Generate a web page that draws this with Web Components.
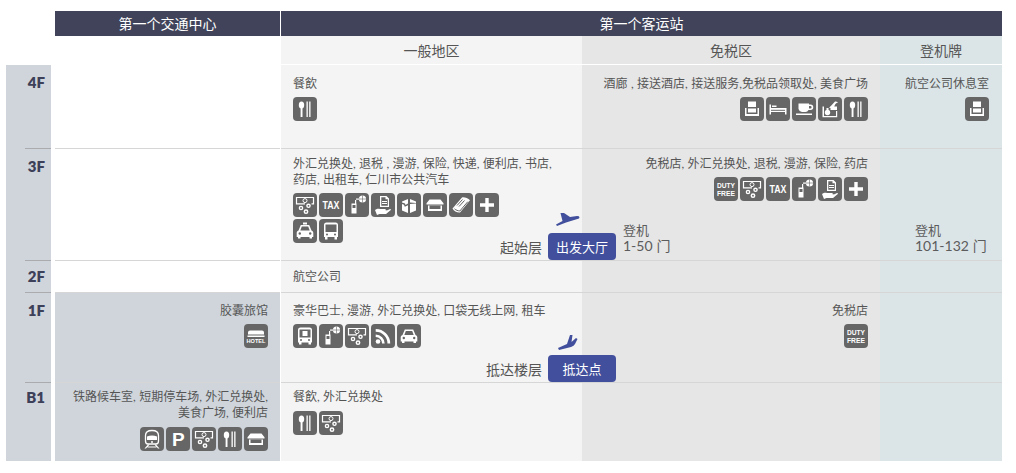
<!DOCTYPE html>
<html lang="zh">
<head>
<meta charset="utf-8">
<title>Floor guide</title>
<style>
  html, body { margin: 0; background: #fff; }
  body { font-family: Lato, "Noto Sans CJK SC", sans-serif; color: #555; }
</style>
</head>
<body>
<floor-map>
  <floor-head slot="head"></floor-head>

  <floor-row h="84" pad="11">
    <floor-label slot="label" pad="9">4F</floor-label>
    <floor-cell></floor-cell>
    <floor-cell zone="general">餐飲
      <icon-row slot="icons" gap="5"><svc-icon name="food"></svc-icon></icon-row>
    </floor-cell>
    <floor-cell zone="duty" end>酒廊 , 接送酒店, 接送服务,免税品领取处, 美食广场
      <icon-row slot="icons" gap="5"><svc-icon name="lounge"></svc-icon><svc-icon name="bed"></svc-icon><svc-icon name="cafe"></svc-icon><svc-icon name="pickup"></svc-icon><svc-icon name="food"></svc-icon></icon-row>
    </floor-cell>
    <floor-cell zone="board" end>航空公司休息室
      <icon-row slot="icons" gap="5"><svc-icon name="lounge"></svc-icon></icon-row>
    </floor-cell>
  </floor-row>

  <floor-row h="112" pad="7">
    <floor-label slot="label" pad="9">3F</floor-label>
    <floor-cell></floor-cell>
    <floor-cell zone="general">外汇兑换处, 退税 , 漫游, 保险, 快递, 便利店, 书店,<br>药店, 出租车, 仁川市公共汽车
      <icon-row slot="icons" gap="5" wrap="208"><svc-icon name="exchange"></svc-icon><svc-icon name="tax"></svc-icon><svc-icon name="roam"></svc-icon><svc-icon name="insure"></svc-icon><svc-icon name="parcel"></svc-icon><svc-icon name="store"></svc-icon><svc-icon name="book"></svc-icon><svc-icon name="plus"></svc-icon><svc-icon name="taxi"></svc-icon><svc-icon name="bus"></svc-icon></icon-row>
    </floor-cell>
    <floor-cell zone="duty" end>免税店, 外汇兑换处, 退税, 漫游, 保险, 药店
      <icon-row slot="icons" gap="5"><svc-icon name="dutyfree"></svc-icon><svc-icon name="exchange"></svc-icon><svc-icon name="tax"></svc-icon><svc-icon name="roam"></svc-icon><svc-icon name="insure"></svc-icon><svc-icon name="plus"></svc-icon></icon-row>
      <gate-note slot="foot" inset="29">登机<span slot="gates">1-50 门</span></gate-note>
    </floor-cell>
    <floor-cell zone="board" end>
      <gate-note slot="foot" inset="23">登机<span slot="gates">101-132 门</span></gate-note>
    </floor-cell>
    <floor-tag slot="over" kind="depart" top="84" caption="起始层">出发大厅</floor-tag>
  </floor-row>

  <floor-row h="32" pad="8">
    <floor-label slot="label" pad="7">2F</floor-label>
    <floor-cell></floor-cell>
    <floor-cell zone="general">航空公司</floor-cell>
    <floor-cell zone="duty"></floor-cell>
    <floor-cell zone="board"></floor-cell>
  </floor-row>

  <floor-row h="90" pad="10">
    <floor-label slot="label" pad="9">1F</floor-label>
    <floor-cell zone="transit" end>胶囊旅馆
      <icon-row slot="icons" gap="5"><svc-icon name="hotel"></svc-icon></icon-row>
    </floor-cell>
    <floor-cell zone="general">豪华巴士, 漫游, 外汇兑换处, 口袋无线上网, 租车
      <icon-row slot="icons" gap="5"><svc-icon name="coach"></svc-icon><svc-icon name="roam"></svc-icon><svc-icon name="exchange"></svc-icon><svc-icon name="wifi"></svc-icon><svc-icon name="car"></svc-icon></icon-row>
    </floor-cell>
    <floor-cell zone="duty" end>免税店
      <icon-row slot="icons" gap="5"><svc-icon name="dutyfree"></svc-icon></icon-row>
    </floor-cell>
    <floor-cell zone="board"></floor-cell>
    <floor-tag slot="over" kind="arrive" top="62" caption="抵达楼层">抵达点</floor-tag>
  </floor-row>

  <floor-row h="78" pad="6" last>
    <floor-label slot="label" pad="6">B1</floor-label>
    <floor-cell zone="transit" end>铁路候车室, 短期停车场, 外汇兑换处,<br>美食广场, 便利店
      <icon-row slot="icons"><svc-icon name="train"></svc-icon><svc-icon name="parking"></svc-icon><svc-icon name="exchange"></svc-icon><svc-icon name="food"></svc-icon><svc-icon name="store"></svc-icon></icon-row>
    </floor-cell>
    <floor-cell zone="general">餐飲, 外汇兑换处
      <icon-row slot="icons"><svc-icon name="food"></svc-icon><svc-icon name="exchange"></svc-icon></icon-row>
    </floor-cell>
    <floor-cell zone="duty"></floor-cell>
    <floor-cell zone="board"></floor-cell>
  </floor-row>
</floor-map>

<script>
function shell(css, html) {
  return `<style>${css}</style>${html}`;
}

class FloorMap extends HTMLElement {
  constructor() {
    super();
    this.attachShadow({ mode: "open" }).innerHTML = shell(`
      :host { display: block; width: 1016px; padding-top: 11px; box-sizing: border-box; }
      .rows { display: flex; flex-direction: column; }
    `, `<slot name="head"></slot><div class="rows"><slot></slot></div>`);
  }
}

class FloorHead extends HTMLElement {
  constructor() {
    super();
    this.attachShadow({ mode: "open" }).innerHTML = shell(`
      :host {
        display: grid;
        grid-template-columns: 225px 1px 301px 298px 122px;
        grid-template-rows: 25px 28px 1px;
        margin-left: 55px;
        width: 947px;
        font-size: 14px;
      }
      .dark { background: #40435a; color: #fff; display: flex; align-items: center; justify-content: center; padding-bottom: 2px; box-sizing: border-box; }
      .all { grid-column: 3 / 6; }
      .sub { display: flex; align-items: center; justify-content: center; color: #555; }
      .sp { grid-column: 1 / 3; }
      .general { background: #f4f4f4; }
      .duty { background: #e6e6e6; }
      .board { background: #dbe5e8; }
    `, `
      <div class="dark">第一个交通中心</div>
      <div></div>
      <div class="dark all">第一个客运站</div>
      <div class="sp"></div>
      <div class="sub general">一般地区</div>
      <div class="sub duty">免税区</div>
      <div class="sub board">登机牌</div>
    `);
  }
}

class FloorRow extends HTMLElement {
  constructor() {
    super();
    this.attachShadow({ mode: "open" }).innerHTML = shell(`
      :host {
        display: grid;
        grid-template-columns: 45px 4px 225px 1px 301px 298px 122px;
        position: relative;
        margin-left: 6px;
        width: 996px;
      }
      ::slotted(floor-label) { grid-column: 1; }
      .gap { grid-column: 2; }
    `, `<slot name="label"></slot><div class="gap"></div><slot></slot><slot name="over"></slot>`);
  }
  connectedCallback() {
    this.style.height = this.getAttribute("h") + "px";
    const cells = [...this.children].filter(c => c.localName === "floor-cell");
    const cols = [3, 5, 6, 7];
    cells.forEach((c, i) => {
      c.style.gridColumn = cols[i];
      c.style.setProperty("--pad", this.getAttribute("pad") + "px");
      if (this.hasAttribute("last")) c.setAttribute("last", "");
    });
    [...this.children].filter(c => c.localName === "floor-label").forEach(c => {
      if (this.hasAttribute("last")) c.setAttribute("last", "");
    });
  }
}

class FloorLabel extends HTMLElement {
  constructor() {
    super();
    this.attachShadow({ mode: "open" }).innerHTML = shell(`
      :host {
        display: flex;
        flex-direction: column;
        background: #d0d5dc;
        color: #3c4058;
        font: 800 15px/16px Lato, sans-serif;
      }
      .t { flex: 1; text-align: right; padding: var(--p, 9px) 6px 0 0; }
      .line { height: 1px; margin-left: 19px; background: #a9abae; }
      :host([last]) .line { background: transparent; }
    `, `<div class="t"><slot></slot></div><div class="line"></div>`);
  }
  connectedCallback() {
    this.style.setProperty("--p", this.getAttribute("pad") + "px");
  }
}

class FloorCell extends HTMLElement {
  constructor() {
    super();
    this.attachShadow({ mode: "open" }).innerHTML = shell(`
      :host {
        display: flex;
        flex-direction: column;
        box-sizing: border-box;
        padding: var(--pad, 6px) 12px 0;
        border-bottom: 1px solid #d6d6d6;
        font-size: 12px;
        line-height: 16px;
        word-spacing: .3px;
        color: #555;
        min-width: 0;
      }
      :host([last]) { border-bottom: 0; }
      :host([zone="general"]) { background: #f4f4f4; }
      :host([zone="duty"]) { background: #e6e6e6; }
      :host([zone="board"]) { background: #dbe5e8; padding-right: 13px; }
      :host([zone="transit"]) { background: #d0d5dc; }
      :host([end]) { text-align: right; align-items: flex-end; }
      .foot { margin-top: auto; align-self: stretch; }
    `, `<div><slot></slot></div><slot name="icons"></slot><div class="foot"><slot name="foot"></slot></div>`);
  }
}

class IconRow extends HTMLElement {
  constructor() {
    super();
    this.attachShadow({ mode: "open" }).innerHTML = shell(`
      :host { display: flex; flex-wrap: wrap; gap: 2px; margin-top: var(--g, 6px); }
    `, `<slot></slot>`);
  }
  connectedCallback() {
    if (this.hasAttribute("gap")) this.style.setProperty("--g", this.getAttribute("gap") + "px");
    if (this.hasAttribute("wrap")) this.style.maxWidth = this.getAttribute("wrap") + "px";
    if (this.parentElement.hasAttribute("end")) this.style.justifyContent = "flex-end";
  }
}

class GateNote extends HTMLElement {
  constructor() {
    super();
    this.attachShadow({ mode: "open" }).innerHTML = shell(`
      :host { display: block; text-align: left; white-space: nowrap; font-size: 13px; line-height: 16px; margin-bottom: 6px; color: #5c5c5c; }
      ::slotted([slot="gates"]) { display: block; font-size: 14px; }
    `, `<slot></slot><slot name="gates"></slot>`);
  }
  connectedCallback() {
    this.style.marginLeft = this.getAttribute("inset") + "px";
  }
}

const PLANES = {
  depart: { box: [24, 13], style: "left:8px;top:-20px", d: "M4.500 0 L8 0 L14 4 L21 3 Q24.500 3 23 5.500 L10 9.500 L1 13 L0 11.500 L6.500 8 Z" },
  arrive: { box: [20, 15], style: "left:10px;top:-20px", d: "M0 13 L9 9 L12 0 L14.500 0 L13.500 7 L18 3 L19.500 4 L17 9 Q16 11 13 12 L1 15 Z" }
};

class FloorTag extends HTMLElement {
  constructor() {
    super();
    const plane = PLANES[this.getAttribute("kind")];
    const caption = this.getAttribute("caption");
    this.attachShadow({ mode: "open" }).innerHTML = shell(`
      :host {
        position: absolute;
        right: 386px;
        top: ${this.getAttribute("top")}px;
        display: flex;
        align-items: center;
        gap: 6px;
        font-size: 14px;
        color: #555;
      }
      .pill {
        position: relative;
        width: 68px;
        height: 27px;
        border-radius: 4px;
        background: #414f9c;
        color: #fff;
        font-size: 13px;
        display: flex;
        align-items: center;
        justify-content: center;
      }
      svg { position: absolute; ${plane.style}; fill: #414f9c; }
    `, `
      <span>${caption}</span>
      <div class="pill">
        <svg width="${plane.box[0]}" height="${plane.box[1]}" viewBox="0 0 ${plane.box[0]} ${plane.box[1]}"><path d="${plane.d}"/></svg>
        <slot></slot>
      </div>
    `);
  }
}

const LABEL = `text-anchor="middle" font-family="Liberation Sans, sans-serif" font-weight="700" fill="#fff"`;

// all glyphs drawn white on a 24 box
const ICONS = {
  food: `<ellipse cx="8.500" cy="8" rx="2.700" ry="3.500"/><rect x="7.600" y="9" width="1.900" height="11"/><rect x="13.500" y="4.500" width="1.300" height="15.500"/><rect x="16.200" y="4.500" width="1.300" height="15.500"/>`,
  lounge: `<path d="M8 4.500h8v5.500H8zM5 11h1.500v6h11v-6H19v8H5zM8 11.500h8v4H8z"/>`,
  bed: `<path d="M3.500 7.500H5V11h15.500v6.500H19v-2.500H5v2.500H3.500zM6 8.500h4.500V10H6z"/><rect x="5" y="12.800" width="14" height="1" fill="#666"/>`,
  cafe: `<path d="M6.500 6.500h10.500v1h1.500a2.500 2.500 0 0 1 0 5.500h-2A4 4 0 0 1 13.500 15H10a4 4 0 0 1-3.500-3zM17 9v2.600h1.300a1.300 1.300 0 0 0 0-2.600zM4 16.500h16V18H4z"/>`,
  pickup: `<path d="M4.500 9.500H6V19h12v-5h1.200v6.200H4.500zM11 11l6-6.500c1 0 2.400.2 3 1-2 .5-3.500 2-4 5.300z"/><rect x="12.500" y="9.500" width="6.500" height="3.500"/><circle cx="9.500" cy="15.500" r="2.700"/><rect x="8.500" y="11" width="2" height="2.500"/>`,
  exchange: `<path d="M12 10.800H3.500V4.500h17v6.300h-2" fill="none" stroke="#fff" stroke-width="1.200"/><circle cx="12" cy="7.600" r="2" fill="none" stroke="#fff"/><circle cx="8" cy="15" r="2.300"/><circle cx="15.500" cy="12.800" r="2.300"/><circle cx="13" cy="18.700" r="2.400"/><circle cx="8" cy="15" r=".9" fill="#666"/><circle cx="15.500" cy="12.800" r=".9" fill="#666"/><circle cx="13" cy="18.700" r=".9" fill="#666"/>`,
  tax: `<text x="12" y="16" ${LABEL} font-size="11" textLength="17" lengthAdjust="spacingAndGlyphs">TAX</text>`,
  roam: `<path d="M6.500 10.500h5v10h-5zM10 7h1.200v3.500H10z"/><rect x="7.500" y="12" width="3" height="3" fill="#666"/><circle cx="17.500" cy="6" r="3.600"/><path d="M17.500 2.400v7.200M13.900 6h7.200" stroke="#666" stroke-width=".6"/><path d="M11 5.500h3v1.200h-3z"/>`,
  insure: `<path d="M9 3h6.500l2.500 2.500V14H9zM10.300 4.200v8.600h6.500V6.200h-2.300v-2z"/><rect x="11" y="8" width="5" height="1"/><rect x="11" y="10" width="5" height="1"/><path d="M4 17c2-1.600 3.500-1.600 5-1h5c1 .2 1 1.500 0 1.700h-3l5.500-.5 2.500-1.200c1-.2 1.200.7.500 1.300L15 21H8.500L6 22z"/>`,
  parcel: `<path d="M5 8.500l6-2.500v4.500L8.500 12 8 10.500 5 9.500zM13 6l6 2.500V10l-6-.5zM5 11l2 .8.800 2 3.200-1.500V20l-6-2.500zM13 11l6-.5v7L13 20z"/>`,
  store: `<path d="M6.500 6.500h11l3 3.800V11.500h-17v-1.200zM5 12.500h14v5.500H5z"/><rect x="6.500" y="12.500" width="11" height="3.500" fill="#666"/>`,
  book: `<path d="M3.500 15.500L13 4.500c2-.6 6 .6 8 2.700L11 19.500c-3 .3-6-1.300-7.500-4z"/><path d="M5.500 15.800c1.500 1.400 3.500 2 5.300 2.200l8-9.300M8 12.500l5.500-6M10 13.500l5.500-6" fill="none" stroke="#666" stroke-width="1"/>`,
  plus: `<path d="M10.300 5h3.400v5.300H19v3.400h-5.300V19h-3.400v-5.300H5v-3.400h5.300z"/>`,
  taxi: `<path d="M10 3.500h4v2h-4zM7.800 6h8.400l2.300 5.500c1.300.5 1.800 1.300 1.800 2.500v4h-1.300v1.500h-2.500V18h-9v1.500H5V18H3.700v-4c0-1.200.5-2 1.800-2.500z"/><path d="M8.800 7.500h6.400l1.500 4H7.300z" fill="#666"/><circle cx="6.800" cy="14.500" r="1.200" fill="#666"/><circle cx="17.200" cy="14.500" r="1.200" fill="#666"/>`,
  car: `<path d="M7.800 5.500h8.400l2.300 5.500c1.300.5 1.800 1.300 1.800 2.500v4h-1.300V19h-2.500v-1.500h-9V19H5v-1.500H3.700v-4c0-1.200.5-2 1.800-2.500z"/><path d="M8.800 7h6.400l1.500 4H7.300z" fill="#666"/><circle cx="6.800" cy="14" r="1.200" fill="#666"/><circle cx="17.200" cy="14" r="1.200" fill="#666"/>`,
  bus: `<path d="M7.500 3.500h9A2.500 2.500 0 0 1 19 6v12h-1v2.500h-2.500V18h-7v2.500H6V18H5V6a2.500 2.500 0 0 1 2.500-2.500z"/><rect x="6.500" y="5.500" width="11" height="7.500" fill="#666"/><circle cx="8" cy="15.500" r="1" fill="#666"/><circle cx="16" cy="15.500" r="1" fill="#666"/>`,
  coach: `<path d="M7.500 3.500h9A2.500 2.500 0 0 1 19 6v12.500h-1v2h-2.500v-2h-7v2H6v-2H5V6a2.500 2.500 0 0 1 2.500-2.500z"/><rect x="6.500" y="5.500" width="11" height="8" fill="#666"/><rect x="9.500" y="7" width="5" height="5"/><circle cx="8" cy="16" r="1" fill="#666"/><circle cx="16" cy="16" r="1" fill="#666"/>`,
  wifi: `<circle cx="7" cy="17.500" r="2.300"/><path d="M4.700 10.500a9 9 0 0 1 9 9h-2.600a6.400 6.400 0 0 0-6.400-6.400zM4.700 5a14.500 14.500 0 0 1 14.500 14.500h-2.700A11.800 11.800 0 0 0 4.700 7.700z"/>`,
  hotel: `<path d="M6 6.500h12a2 2 0 0 1 2 2v2H4v-2a2 2 0 0 1 2-2z"/><rect x="3.500" y="11.500" width="17" height="1.500"/><text x="12" y="18.800" ${LABEL} font-size="5.600">HOTEL</text>`,
  train: `<path d="M12 3.500c4 0 6.500 1.500 6.500 5V14c0 1.500-1 3-2.500 3H8c-1.500 0-2.500-1.500-2.500-3V8.500c0-3.500 2.500-5 6.500-5z" fill="none" stroke="#fff" stroke-width="1.300"/><path d="M7 9.500c3-1.200 7-1.200 10 0V13H7z"/><circle cx="12" cy="15" r="1"/><path d="M8 17.500h1.700L6 21.500H4.500zM14.300 17.500H16l3.500 4H18zM7.500 19.500h9v1h-9z"/>`,
  parking: `<text x="12.300" y="18.700" ${LABEL} font-size="19">P</text>`,
  dutyfree: `<text x="12" y="11" ${LABEL} font-size="8" textLength="18" lengthAdjust="spacingAndGlyphs">DUTY</text><text x="12" y="19" ${LABEL} font-size="8" textLength="18" lengthAdjust="spacingAndGlyphs">FREE</text>`
};

class SvcIcon extends HTMLElement {
  constructor() {
    super();
    this.attachShadow({ mode: "open" }).innerHTML = shell(`
      :host { display: block; width: 24px; height: 24px; border-radius: 4px; background: #666; }
      svg { display: block; fill: #fff; }
    `, `<svg width="24" height="24" viewBox="0 0 24 24">${ICONS[this.getAttribute("name")] || ""}</svg>`);
  }
}

customElements.define("floor-map", FloorMap);
customElements.define("floor-head", FloorHead);
customElements.define("floor-row", FloorRow);
customElements.define("floor-label", FloorLabel);
customElements.define("floor-cell", FloorCell);
customElements.define("icon-row", IconRow);
customElements.define("gate-note", GateNote);
customElements.define("floor-tag", FloorTag);
customElements.define("svc-icon", SvcIcon);
</script>
</body>
</html>
